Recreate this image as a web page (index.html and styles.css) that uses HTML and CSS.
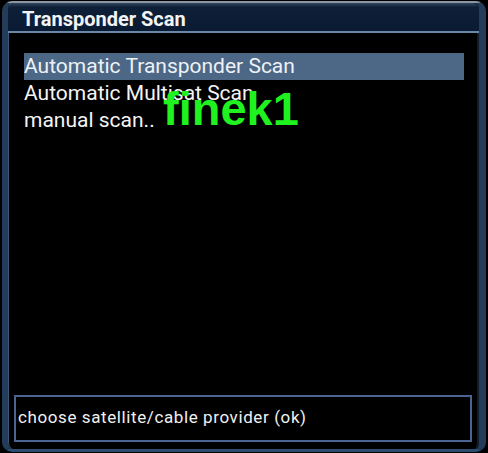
FILE: index.html
```html
<!DOCTYPE html>
<html>
<head>
<meta charset="utf-8">
<link rel="stylesheet" href="styles.css">
</head>
<body>
<div class="frame">
  <div class="titlebar"><span class="title">Transponder Scan</span></div>
  <div class="content">
    <ul class="menu">
      <li class="item selected">Automatic Transponder Scan</li>
      <li class="item">Automatic Multisat Scan</li>
      <li class="item">manual scan..</li>
    </ul>
    <div class="watermark">finek1</div>
    <div class="help">choose satellite/cable provider (ok)</div>
  </div>
</div>
</body>
</html>
```
FILE: styles.css
```css
html, body {
  margin: 0;
  padding: 0;
  background: #000;
  width: 488px;
  height: 453px;
  overflow: hidden;
}
.frame {
  margin: 1px 0 0 2px;
  width: 484px;
  height: 451px;
  box-sizing: border-box;
  border-radius: 10px;
  border-top: 2px solid #8a98a6;
  border-left: 6px solid #223c5a;
  border-right: 7px solid #223c5a;
  border-bottom: 3px solid #2d4b6c;
  display: flex;
  flex-direction: column;
  background: #000;
  box-shadow: inset 1px 0 0 #3d5877, inset -2px 0 0 #101d2c;
  position: relative;
}
.titlebar {
  height: 30px;
  box-sizing: border-box;
  background: linear-gradient(#33485e 0, #0e2038 4px, #0a1a33 100%);
  border-bottom: 2px solid #6a88a8;
  border-radius: 6px 6px 0 0;
  padding: 5px 0 0 14px;
}
.title {
  font-family: Roboto, "Liberation Sans", sans-serif;
  font-weight: 700;
  font-size: 20px;
  color: #f2f4f6;
  line-height: 22px;
}
.content {
  flex: 1;
  display: flex;
  flex-direction: column;
  position: relative;
}
.menu {
  list-style: none;
  margin: 20px 15px 0 16px;
  padding: 0;
}
.item {
  font-family: Roboto, "Liberation Sans", sans-serif;
  font-size: 21px;
  line-height: 27px;
  height: 27px;
  color: #f4f4f4;
  padding-left: 0;
}
.item.selected {
  background: #4d6886;
  color: #eef2f6;
}
.watermark {
  position: absolute;
  left: 155px;
  top: 51px;
  font-family: "Liberation Sans", Arial, sans-serif;
  font-weight: 700;
  font-size: 47px;
  line-height: 50px;
  color: #1ff21f;
}
.help {
  margin: auto 7px 7px 6px;
  height: 47px;
  box-sizing: border-box;
  border: 2px solid #4b6593;
  font-family: Roboto, "Liberation Sans", sans-serif;
  font-size: 17px;
  letter-spacing: 0.6px;
  color: #f0f0f0;
  padding: 9px 0 0 2px;
  line-height: 22px;
}
```
